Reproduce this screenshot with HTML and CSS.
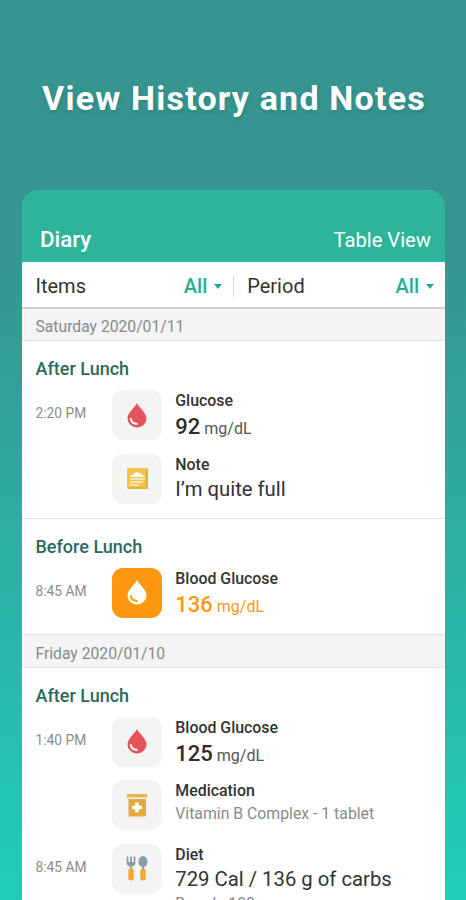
FILE: index.html
```html
<!DOCTYPE html>
<html lang="en">
<head>
<meta charset="UTF-8">
<meta name="viewport" content="width=device-width, initial-scale=1.0">
<title>Diary</title>
<link rel="stylesheet" href="styles.css">
</head>
<body>
<!-- Shared icons -->
<svg class="defs" width="0" height="0">
  <symbol id="drop" viewBox="0 0 20 25">
    <path fill="currentColor" d="M10 0C8 4.500 .5 9.500 .5 15.500a9.500 9 0 0 0 19 0C19.500 9.500 12 4.500 10 0z"/>
    <path class="shine" d="M3.800 16c.6 3 2.700 4.800 6 5"/>
  </symbol>
</svg>

<h1>View History and Notes</h1>

<div class="phone">
  <div class="header">
    <h2>Diary</h2>
    <span class="table-view">Table View</span>
  </div>

  <!-- Filters -->
  <div class="filters">
    <div class="filter">
      <span>Items</span>
      <span class="value">All<i class="caret"></i></span>
    </div>
    <div class="filter period">
      <span>Period</span>
      <span class="value">All<i class="caret"></i></span>
    </div>
  </div>

  <div class="date first">Saturday 2020/01/11</div>
  <div class="group">
    <h3>After Lunch</h3>
    <div class="entry">
      <span class="time">2:20 PM</span>
      <div class="icon drop"><svg width="20" height="25"><use href="#drop"/></svg></div>
      <div class="info">
        <div class="name">Glucose</div>
        <div class="reading"><b>92</b> mg/dL</div>
      </div>
    </div>
    <div class="entry">
      <span class="time"></span>
      <div class="icon">
        <svg width="21" height="21" viewBox="0 0 21 21">
          <rect width="21" height="21" rx="1" fill="#f3c446"/>
          <path d="M18.500 1H21v20H1v-2h17.500z" fill="#e9b03a"/>
          <path d="M3 9c1-2 2-2 3.500-2.500C8 4 10 3 11.500 5c2-.5 3 1 3.500 2 1.500 0 2.500 1 3 2z" fill="#fff"/>
          <path d="M3 11h15M3 14h13M3 17h9" stroke="#fff3cf" stroke-width="1.500"/>
        </svg>
      </div>
      <div class="info">
        <div class="name">Note</div>
        <div class="text">I’m quite full</div>
      </div>
    </div>
  </div>

  <div class="group">
    <h3>Before Lunch</h3>
    <div class="entry">
      <span class="time">8:45 AM</span>
      <div class="icon drop high"><svg width="20" height="25"><use href="#drop"/></svg></div>
      <div class="info">
        <div class="name">Blood Glucose</div>
        <div class="reading high"><b>136</b> mg/dL</div>
      </div>
    </div>
  </div>

  <div class="date">Friday 2020/01/10</div>
  <div class="group">
    <h3>After Lunch</h3>
    <div class="entry">
      <span class="time">1:40 PM</span>
      <div class="icon drop"><svg width="20" height="25"><use href="#drop"/></svg></div>
      <div class="info">
        <div class="name">Blood Glucose</div>
        <div class="reading"><b>125</b> mg/dL</div>
      </div>
    </div>
    <div class="entry">
      <span class="time"></span>
      <div class="icon">
        <svg width="20" height="23" viewBox="0 0 20 23">
          <path d="M0 0h20v3.500H0z" fill="#e9b456"/>
          <path d="M1.500 5h17.500v16a1.500 1.500 0 0 1-1.500 1.500H3A1.500 1.500 0 0 1 1.500 21z" fill="#e6a93f"/>
          <path d="M10 8.500v10M5 13.500h10" stroke="#fff" stroke-width="3.500"/>
        </svg>
      </div>
      <div class="info">
        <div class="name">Medication</div>
        <div class="note">Vitamin B Complex - 1 tablet</div>
      </div>
    </div>
    <div class="entry">
      <span class="time">8:45 AM</span>
      <div class="icon">
        <svg width="22" height="25" viewBox="0 0 22 25">
          <path d="M1.500 .5v6.500q0 2.500 3.500 2.500T8.500 7V.5M5 .5V13" fill="none" stroke="#8b9ca3" stroke-width="1.800"/>
          <path d="M2 6h6v2.500l-2 1.500H4L2 8.500z" fill="#8b9ca3"/>
          <ellipse cx="17" cy="5.500" rx="4.500" ry="5.500" fill="#8b9ca3"/>
          <path d="M17 9v5" stroke="#8b9ca3" stroke-width="2"/>
          <rect x="2.300" y="12.500" width="5.400" height="12" rx="2" fill="#f0a930"/>
          <rect x="14.300" y="12.500" width="5.400" height="12" rx="2" fill="#f0a930"/>
        </svg>
      </div>
      <div class="info">
        <div class="name">Diet</div>
        <div class="text">729 Cal / 136 g of carbs</div>
        <div class="note">Breads 100</div>
      </div>
    </div>
  </div>
</div>

</body>
</html>
```
FILE: styles.css
```css
* {
  box-sizing: border-box;
}
body {
  font-family: Roboto, "Liberation Sans", sans-serif;
  background: linear-gradient(#36958f 0, #36958f 240px, #20cdb9 900px);
  color: #333;
  height: 900px;
  margin: 0;
  overflow: hidden;
  display: flex;
  flex-direction: column;
}
h1, h2, h3 {
  margin: 0;
  font-weight: 500;
}
.defs {
  position: absolute;
}
h1 {
  height: 190px;
  flex: none;
  padding: 78px 0 0 2px;
  line-height: 40px;
  font-size: 34px;
  font-weight: 700;
  letter-spacing: 1.2px;
  text-align: center;
  white-space: nowrap;
  color: #fff;
  text-shadow: 1px 3px 4px rgba(0, 60, 50, 0.15);
}
.phone {
  width: 423px;
  margin-left: 22px;
  flex: 1;
  min-height: 0;
  overflow: hidden;
  background: linear-gradient(#2cb59a 72px, #fff 72px);
  border-radius: 16px 16px 0 0;
}
.header {
  height: 72px;
  padding: 35px 14px 0 18px;
  display: flex;
  justify-content: space-between;
  line-height: 30px;
  color: #fff;
}
.header h2 {
  font-size: 22.3px;
  line-height: 28px;
}
.table-view {
  font-size: 20.2px;
}
.filters {
  display: flex;
  height: 45px;
  align-items: center;
  font-size: 20px;
  padding: 3px 11px 0 13.5px;
}
.filter {
  display: flex;
  flex: 1;
  justify-content: space-between;
  line-height: 22px;
}
.filter.period {
  margin-left: 11px;
  padding-left: 13px;
  border-left: 1px solid #ddd;
}
.value {
  display: flex;
  align-items: center;
  gap: 7px;
  font-weight: 500;
  color: #1fae8e;
}
.caret {
  border: 4px solid transparent;
  border-top: 5px solid #1fae8e;
  border-bottom: 0;
}
.date {
  height: 34px;
  padding-left: 13.5px;
  line-height: 37px;
  font-size: 15.7px;
  color: #8a8a8a;
  background-color: #f4f4f4;
  border-top: 1px solid #e2e2e2;
  border-bottom: 1px solid #e2e2e2;
}
.date.first {
  line-height: 36px;
  border-top: 2px solid #cfcfcf;
}
.group {
  padding: 16px 14px 15px 13.5px;
}
.group + .group {
  margin-top: -1px;
  border-top: 1px solid #e6e6e6;
}
.group + .date {
  margin-top: 1px;
}
h3 {
  height: 33px;
  line-height: 23px;
  font-size: 18px;
  color: #2a6b5c;
}
.entry {
  display: flex;
  height: 50px;
}
.entry + .entry {
  margin-top: 13.5px;
}
.time {
  width: 76.5px;
  line-height: 47px;
  font-size: 13.8px;
  color: #8c8c8c;
}
.icon {
  width: 50px;
  height: 50px;
  flex: none;
  display: flex;
  align-items: center;
  justify-content: center;
  border-radius: 11px;
  background-color: #f4f4f4;
}
.icon.drop {
  --shine: #fff;
  color: #e65358;
}
.icon.high {
  --shine: #ff9811;
  background-color: #ff9811;
  color: #fff;
}
.shine {
  fill: none;
  stroke: var(--shine);
  stroke-width: 2;
  stroke-linecap: round;
}
.info {
  padding-left: 13.3px;
  white-space: nowrap;
}
.name {
  height: 21px;
  line-height: 21px;
  font-size: 15.9px;
  font-weight: 500;
}
.reading {
  line-height: 32px;
  font-size: 16px;
  color: #555;
}
.reading b {
  font-size: 22px;
  font-weight: 500;
  color: #2d2d2d;
}
.reading.high, .reading.high b {
  color: #ff9811;
}
.text {
  line-height: 29px;
  font-size: 20.3px;
}
.note {
  line-height: 25px;
  font-size: 15.8px;
  color: #8a8a8a;
}
.text + .note {
  line-height: 20px;
}
```
